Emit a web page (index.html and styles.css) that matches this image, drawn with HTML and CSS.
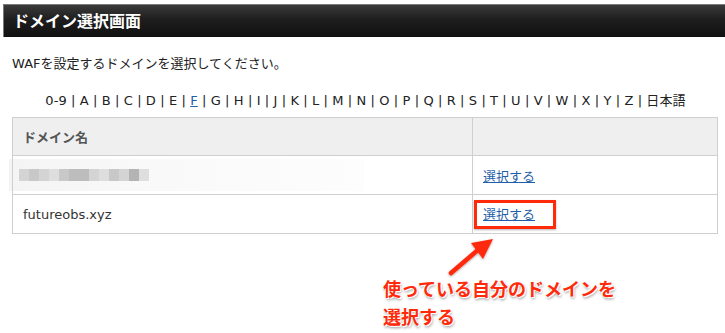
FILE: index.html
```html
<!DOCTYPE html>
<html lang="ja">
<head>
  <meta charset="UTF-8">
  <meta name="viewport" content="width=device-width, initial-scale=1.0">
  <title>ドメイン選択画面</title>
  <link rel="stylesheet" href="styles.css">
</head>
<body>
  <div class="page">
    <h1 class="page-title">ドメイン選択画面</h1>

    <p class="intro">WAFを設定するドメインを選択してください。</p>

    <p class="index-nav">
      0-9 | A | B | C | D | E | <a href="#">F</a> | G | H | I | J | K | L | M | N | O | P | Q | R | S | T | U | V | W | X | Y | Z | 日本語
    </p>

    <table class="domain-table">
      <tr>
        <th class="col-name">ドメイン名</th>
        <th></th>
      </tr>
      <tr>
        <td class="blurred-cell">
          <div class="blur">
            <span class="b1"></span><span class="b2"></span><span class="b1"></span><span class="b3"></span><span class="b2"></span><span class="b4"></span><span class="b4"></span><span class="b1"></span><span class="b3"></span><span class="b2"></span><span class="b1"></span><span class="b5"></span><span class="b3"></span>
          </div>
        </td>
        <td><a href="#">選択する</a></td>
      </tr>
      <tr>
        <td>futureobs.xyz</td>
        <td><a href="#" class="marked">選択する</a></td>
      </tr>
    </table>

    <!-- annotation -->
    <svg class="arrow" width="60" height="50" viewBox="0 0 60 50">
      <defs>
        <filter id="sh" x="-30%" y="-30%" width="160%" height="160%">
          <feDropShadow dx="0" dy="1" stdDeviation="1.2" flood-color="#000" flood-opacity="0.35"/>
        </filter>
      </defs>
      <g filter="url(#sh)">
        <line x1="8" y1="40" x2="36" y2="16" stroke="#ff2a0a" stroke-width="4.5" stroke-linecap="round"/>
        <polygon points="50,6 28,10 40,26" fill="#ff2a0a"/>
      </g>
    </svg>
    <p class="note">使っている自分のドメインを<br>選択する</p>
  </div>
</body>
</html>
```

FILE: styles.css
```css
* {
  box-sizing: border-box;
}

body {
  margin: 0;
  background: #ffffff;
  color: #333;
  font-family: "DejaVu Sans", "Noto Sans CJK JP", sans-serif;
  font-size: 13px;
}

.page {
  position: relative;
  width: 725px;
  height: 333px;
  overflow: hidden;
}

.page-title {
  margin: 4px 0 0 3px;
  height: 33px;
  padding: 0 0 0 9px;
  border-top: 1px solid #7a7a7a;
  border-left: 1px solid #7a7a7a;
  background: linear-gradient(#3a3a3a, #1e1e1e 45%, #111111);
  color: #ffffff;
  font-family: "Noto Sans CJK JP", sans-serif;
  font-size: 16px;
  font-weight: bold;
  line-height: 31px;
}

.intro {
  margin: 17px 0 0 12px;
  font-size: 13px;
  line-height: 20px;
  color: #222;
}

.index-nav {
  margin: 18px 0 0 0;
  padding-left: 6px;
  text-align: center;
  font-size: 13px;
  letter-spacing: 0.1px;
  line-height: 18px;
  color: #222;
}

.index-nav a {
  color: #1f5ea8;
}

.domain-table {
  margin: 7px 0 0 12px;
  width: 706px;
  border-collapse: collapse;
  border: 1px solid #cfcfcf;
}

.domain-table th,
.domain-table td {
  border: 1px solid #cfcfcf;
  padding: 0 10px;
  height: 39px;
  text-align: left;
  font-size: 13px;
  color: #333;
}

.domain-table th {
  height: 38px;
  background: #efefef;
  color: #555;
  font-weight: bold;
  font-family: "Noto Sans CJK JP", sans-serif;
  font-size: 13px;
}

.col-name {
  width: 460px;
}

.domain-table a {
  color: #1f5ea8;
  font-family: "Noto Sans CJK JP", sans-serif;
  font-size: 13px;
}

.domain-table td.blurred-cell {
  padding: 0;
}

.blur {
  display: flex;
  align-items: center;
  margin-left: -4px;
  width: 355px;
  height: 32px;
  padding-left: 10px;
  background: linear-gradient(90deg, #f4f4f4, #f9f9f9 40%, #fdfdfd);
}

.blur span {
  display: block;
  width: 10px;
  height: 12px;
}

.blur .b1 { background: #d4d4d4; }
.blur .b2 { background: #c8c8c8; }
.blur .b3 { background: #dedede; }
.blur .b4 { background: #bdbdbd; }
.blur .b5 { background: #b4b4b4; }

.marked {
  display: inline-block;
  margin-left: -9px;
  padding: 1px 18px 3px 6px;
  border: 3px solid #ff2a0a;
  box-shadow: 0 1px 2px rgba(0, 0, 0, 0.3);
}

.arrow {
  position: absolute;
  left: 443px;
  top: 233px;
}

.note {
  position: absolute;
  left: 383px;
  top: 274px;
  margin: 0;
  font-family: "Noto Sans CJK JP", sans-serif;
  font-size: 18px;
  font-weight: bold;
  line-height: 28px;
  color: #ff2a0a;
  text-shadow: 0 0 2px #fff, 1px 1px 0 #fff, -1px -1px 0 #fff, 1px 2px 3px rgba(0, 0, 0, 0.45);
}
```
